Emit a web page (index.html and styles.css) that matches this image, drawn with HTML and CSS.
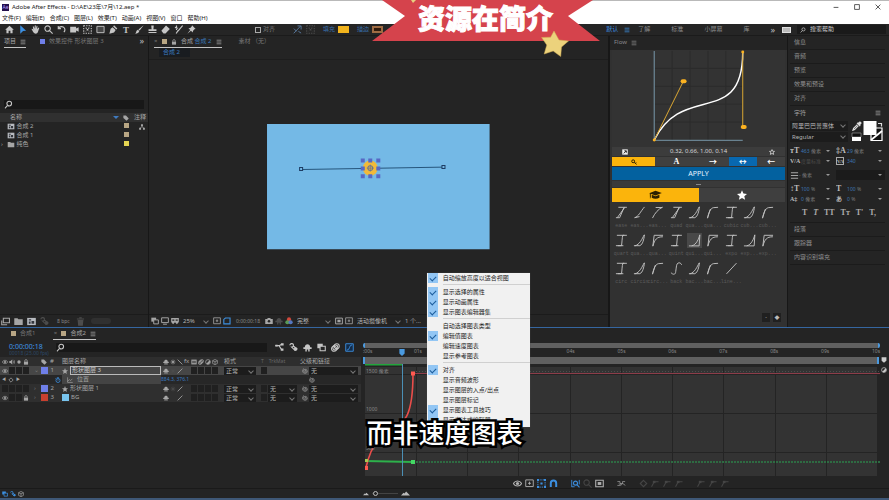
FILE: index.html
```html
<!DOCTYPE html>
<html lang="zh-CN">
<head>
<meta charset="utf-8">
<title>Adobe After Effects - D:\AE\23年\7月\12.aep *</title>
<link rel="stylesheet" href="styles.css">
</head>
<body>
<svg class="defs" width="0" height="0" aria-hidden="true">
  <symbol id="home" viewBox="0 0 10 10"><path fill="currentColor" d="M5 .8 9.8 5.2H8.4V9.2H6V6.4H4v2.8H1.6V5.2H.2z"/></symbol>
  <symbol id="arrow" viewBox="0 0 10 10"><path fill="currentColor" d="M2.5.2 9 6.4 5.6 6.6 2.5 9.6z"/></symbol>
  <symbol id="hand" viewBox="0 0 10 10"><path fill="currentColor" d="M.6 4.4c.8-.5 1.4.3 2 1.1L2 2c.1-.8.9-.8 1.1 0l.7 2.2L4.2.8c.2-.7 1-.7 1.1 0v3.3L6.2 1.2c.3-.6 1-.4 1 .2l-.4 3L8.2 3c.6-.4 1.1 0 .9.7L7.6 8c-.5 1-1.1 1.6-2.4 1.6C3 9.6 2 6.8.6 4.4z"/></symbol>
  <symbol id="mag" viewBox="0 0 10 10"><g fill="none" stroke="currentColor" stroke-width="1.2"><circle cx="4" cy="4" r="3"/><path d="m6.2 6.2 3.4 3.4"/></g></symbol>
  <symbol id="find" viewBox="0 0 10 10"><g fill="none" stroke="currentColor" stroke-width="1.2"><circle cx="5.8" cy="4" r="2.6"/><path d="M4 6 1 9.2"/></g></symbol>
  <symbol id="rotate" viewBox="0 0 10 10"><path fill="none" stroke="currentColor" stroke-width="1.2" d="M1.4 1v3h3M1.6 3.8C3 1.4 6.6 1 8.2 3.4c1 1.800.4 3.600-.6 4.6"/></symbol>
  <symbol id="cam" viewBox="0 0 10 10"><path fill="currentColor" d="M.2 2h6.600v2L9.6 2.400v5.200L6.8 6v2.200H.2z"/></symbol>
  <symbol id="anchor" viewBox="0 0 10 10"><g fill="none" stroke="currentColor" stroke-width="1.2" stroke-dasharray="1.5 1.2"><path d="M.8.8h8.400v8.400H.8z"/><path d="M3 3l4 4M7 3 3 7"/></g></symbol>
  <symbol id="rect" viewBox="0 0 10 10"><path fill="#454545" stroke="currentColor" d="M1 1.500h8v7H1z"/></symbol>
  <symbol id="pen" viewBox="0 0 10 10"><path fill="currentColor" d="m5.600.4 3.600 3.400-1 1.200L4.600 1.600zM4 2.400l3.400 3.200-1.800 2.600L.4 9.600 1.800 4.200z"/></symbol>
  <symbol id="brush" viewBox="0 0 10 10"><path fill="currentColor" d="M9.600.2 5.200 6.200 3.800 5zM3.200 5.400l1.600 1.400C4.400 9 2.400 9.600.3 9.600c1.300-1 .7-3.600 2.900-4.200z"/></symbol>
  <symbol id="stamp" viewBox="0 0 10 10"><path fill="currentColor" d="M3.600.6h2.800L6 4.800h3.400v1.800H.6V4.800H4zM.6 7.800h8.800V9H.6z"/></symbol>
  <symbol id="eraser" viewBox="0 0 10 10"><path fill="currentColor" d="M5.600.6 9.800 4.400 5 9.400H2.800L.4 6.400z"/></symbol>
  <symbol id="roto" viewBox="0 0 10 10"><path fill="none" stroke="currentColor" stroke-width="1.300" d="M2.800.6v5M1 2.600l3.600 1M9.600.6 4.400 6.800M4.600 6 2.400 9.400"/></symbol>
  <symbol id="pin" viewBox="0 0 10 10"><path fill="currentColor" d="M5.600.4 9.600 4.400 8.200 4.800 6.600 6.600 6.400 8.400 4.400 6.400.4 9.600 3.600 5.600 1.600 3.600 3.600 3.400 5.200 1.800z"/></symbol>
  <symbol id="snap" viewBox="0 0 10 10"><path fill="none" stroke="currentColor" d="M.8 9.200 8.600 1M5 1h4v4M1 4l3 3M6 7l3 2"/></symbol>
  <symbol id="menu" viewBox="0 0 10 10"><path stroke="currentColor" stroke-width="1.2" d="M1 2h8M1 5h8M1 8h8"/></symbol>
  <symbol id="lock" viewBox="0 0 10 10"><path fill="currentColor" d="M1.600 4.400h6.800v5H1.600z"/><path fill="none" stroke="currentColor" stroke-width="1.300" d="M3 4.600V2.800C3 .4 7 .4 7 2.800v1.800"/></symbol>
  <symbol id="eye" viewBox="0 0 10 10"><path fill="none" stroke="currentColor" stroke-width="1.200" d="M.4 5C2.600 1.400 7.400 1.400 9.600 5 7.400 8.600 2.600 8.600.4 5z"/><circle cx="5" cy="5" r="1.800" fill="currentColor"/></symbol>
  <symbol id="audio" viewBox="0 0 10 10"><path fill="currentColor" d="M.6 3.400h2L5.400 1v8L2.600 6.600h-2z"/><path fill="none" stroke="currentColor" d="M6.400 3c1.600 1 1.600 3 0 4M7.600 1.400c2.600 2 2.600 5.200 0 7.200"/></symbol>
  <symbol id="dot" viewBox="0 0 10 10"><circle cx="5" cy="5" r="2.800" fill="currentColor"/></symbol>
  <symbol id="tag" viewBox="0 0 10 10"><path fill="currentColor" d="M.6 1h4.400L9.600 6 6 9.600.6 5z"/></symbol>
  <symbol id="marker" viewBox="0 0 10 10"><path fill="currentColor" d="M1 .6h8v5.600L5 9.600 1 6.200z"/></symbol>
  <symbol id="comp" viewBox="0 0 10 10"><path fill="#b8bbc0" d="M.2 1h9.600v8H.2z"/><path fill="#33363c" d="M2 2.600h2.600v1.200H2zM5 4.400h3v3H5zM2 5h2v2.400H2z"/></symbol>
  <symbol id="folder" viewBox="0 0 10 10"><path fill="currentColor" d="M.3 1.400h3.600l1 1.200h4.800v6.200H.3z"/></symbol>
  <symbol id="net" viewBox="0 0 10 10"><path fill="currentColor" d="M3.400.6h3.200v3H3.400zM.2 6.400h3.200v3H.2zM6.600 6.400h3.200v3H6.600z"/><path fill="none" stroke="currentColor" d="M5 3v2.400M2 6.600 5 4.600l3 2"/></symbol>
  <symbol id="footage" viewBox="0 0 10 10"><path fill="none" stroke="currentColor" stroke-width="1.200" d="M2.600 1.400h6.800v5H2.600zM.8 4v4.600h6"/></symbol>
  <symbol id="trash" viewBox="0 0 10 10"><path fill="currentColor" d="M1 1.600h8v1.200H1zM3.600.4h2.800v1H3.600zM1.800 3.400h6.400L7.600 9.600H2.400z"/></symbol>
  <symbol id="stack" viewBox="0 0 10 10"><path fill="currentColor" d="M.4.8h6v5h-6z"/><path fill="#252525" stroke="currentColor" stroke-width="1.200" d="M3.400 3.600h5.800v5H3.400z"/></symbol>
  <symbol id="monitor" viewBox="0 0 10 10"><path fill="none" stroke="currentColor" stroke-width="1.200" d="M.8 1h8.400v6H.8zM2.600 9h4.800"/></symbol>
  <symbol id="mask" viewBox="0 0 10 10"><path fill="currentColor" d="M.2 1.200h9.600v5L7.400 9 5 6.600 2.600 9 .2 6.200z"/><path fill="#252525" d="M1.600 3h2.600v1.800H1.600zM5.800 3h2.600v1.800H5.800z"/></symbol>
  <symbol id="grid" viewBox="0 0 10 10"><path fill="none" stroke="currentColor" d="M.8 1h8.400v7.400H.8zM5 3v3.400M3.400 4.800h3.200"/></symbol>
  <symbol id="bounds" viewBox="0 0 10 10"><path fill="none" stroke="currentColor" stroke-width="1.400" d="M1 8.600V3l2-1.800h5.800v7.400z"/></symbol>
  <symbol id="photo" viewBox="0 0 10 10"><path fill="currentColor" d="M.3 2.400h2.400l.8-1.200h3l.8 1.200h2.400v6.400H.3z"/><circle cx="5" cy="5.400" r="1.600" fill="#252525"/></symbol>
  <symbol id="rgb" viewBox="0 0 10 10"><circle cx="5" cy="3" r="2.600" fill="#d24a3d"/><circle cx="3" cy="6.600" r="2.600" fill="#5a9a55"/><circle cx="7" cy="6.600" r="2.600" fill="#5477c0"/></symbol>
  <symbol id="target" viewBox="0 0 10 10"><path fill="none" stroke="currentColor" stroke-width="1.200" d="M.8 1.400h8.400v7.200H.8z"/><path fill="currentColor" d="M3 3.400h4v3.200H3z"/></symbol>
  <symbol id="clock" viewBox="0 0 10 10"><g fill="none" stroke="currentColor" stroke-width="1.300"><circle cx="5" cy="5.800" r="3.400"/><path d="M5 3.800v2.200M3.600 1h2.800M1 2.800 2.400 1.400"/></g></symbol>
  <symbol id="chart" viewBox="0 0 10 10"><path fill="none" stroke="currentColor" stroke-width="1.100" d="M1 .6V9h8.600M1 7l3-2.600 2 1.600L9 3"/></symbol>
  <symbol id="star" viewBox="0 0 10 10"><path fill="currentColor" d="M5 .2 6.400 3.600 10 3.900 7.300 6.200 8.100 9.800 5 7.900 1.900 9.800 2.700 6.200 0 3.900 3.600 3.600z"/></symbol>
  <symbol id="starline" viewBox="0 0 10 10"><path fill="none" stroke="currentColor" stroke-width="1.400" d="M5 1 6.200 3.800 9.200 4 7 6 7.700 9 5 7.400 2.300 9 3 6 .8 4 3.800 3.800z"/></symbol>
  <symbol id="shy" viewBox="0 0 10 10"><path fill="currentColor" d="M2 4.600C2 .2 8 .2 8 4.600h1.600v2H7.400v2.800H5.800V7.200H4.200v2.200H2.600V6.600H.4v-2z"/></symbol>
  <symbol id="sun" viewBox="0 0 10 10"><path stroke="currentColor" stroke-width="1.200" d="M5 1v8M1 5h8M2.400 2.400l5.200 5.200M7.600 2.400 2.400 7.600"/></symbol>
  <symbol id="slash" viewBox="0 0 10 10"><path stroke="currentColor" stroke-width="1.400" d="M1 9 9 1"/></symbol>
  <symbol id="back" viewBox="0 0 10 10"><path stroke="currentColor" stroke-width="1.400" d="M1 1l8 8"/></symbol>
  <symbol id="blend" viewBox="0 0 10 10"><path fill="currentColor" d="M.6 1h8.800v8H.6z"/><path fill="#333" d="M2.400 3h2v4h-2zM5.600 3h2v4h-2z"/></symbol>
  <symbol id="blur" viewBox="0 0 10 10"><g fill="none" stroke="currentColor" stroke-width="1.200"><circle cx="6.400" cy="3.600" r="2.800"/><circle cx="4.800" cy="5" r="2.800"/><circle cx="3.400" cy="6.400" r="2.800"/></g></symbol>
  <symbol id="half" viewBox="0 0 10 10"><circle cx="5" cy="5" r="4" fill="none" stroke="currentColor" stroke-width="1.200"/><path fill="currentColor" d="M2.200 7.800A4 4 0 0 0 7.800 2.200z"/></symbol>
  <symbol id="cube" viewBox="0 0 10 10"><path fill="none" stroke="currentColor" stroke-width="1.100" d="M5 .8 9 2.800v4.600L5 9.400 1 7.400V2.800zM1 2.800l4 2 4-2M5 4.800v4.600"/></symbol>
  <symbol id="whip" viewBox="0 0 10 10"><path fill="none" stroke="currentColor" stroke-width="1.100" d="M5 5c0-1.400 2-1 2 .4 0 2.400-4.200 2.200-4.200-.6 0-3.600 6-3.400 6 .8C8.800 10 1 10 1 5 1 3 2 1.400 3.400.8"/></symbol>
  <symbol id="flowchart" viewBox="0 0 10 10"><path fill="none" stroke="currentColor" stroke-width="1.300" d="M.4 3h4.200L7 1.600M4.600 3 7 7"/><path fill="currentColor" d="M6.600.4h3v2.400h-3zM6.400 6h3v2.600h-3zM.4 2h2.600v2H.4z"/></symbol>
  <symbol id="draft" viewBox="0 0 10 10"><path fill="none" stroke="currentColor" stroke-width="1.300" d="M1 2.600a2 2 0 1 1 2 2L7 8.400M4.600 3 9 7"/><circle cx="7.400" cy="6.800" r="2" fill="currentColor"/></symbol>
  <symbol id="graph" viewBox="0 0 10 10"><path fill="#132c49" stroke="currentColor" d="M.8.8h8.400v8.400H.8z"/><path fill="none" stroke="currentColor" d="M2 8C6 8 4 2 8 2"/></symbol>
  <symbol id="fit" viewBox="0 0 10 10"><path fill="none" stroke="currentColor" stroke-dasharray="1.600 1" d="M1 1h8v8H1z"/><path fill="currentColor" d="M0 0h2.200v2.200H0zM7.800 0H10v2.200H7.800zM0 7.800h2.200V10H0zM7.800 7.800H10V10H7.800zM3.800 3.800h2.400v2.400H3.800z"/></symbol>
  <symbol id="magnet" viewBox="0 0 10 10"><path fill="none" stroke="currentColor" stroke-width="2.200" d="M2 9V4.600c0-4 6-4 6 0V9"/></symbol>
  <symbol id="zoomfit" viewBox="0 0 10 10"><path fill="none" stroke="currentColor" d="M.8 1v8M9.200 1v5M1 8.600h3"/><circle cx="5" cy="4.600" r="2.200" fill="none" stroke="currentColor" stroke-width="1.200"/><path stroke="currentColor" stroke-width="1.200" d="m6.600 6.200 2.800 3"/></symbol>
  <symbol id="keys" viewBox="0 0 14 10"><path fill="none" stroke="currentColor" d="M.6 2h4v3h4V2h4M.6 8h4L9 5l4 3M3 5l3 3"/></symbol>
  <symbol id="keydim" viewBox="0 0 10 10"><path fill="none" stroke="currentColor" stroke-width="1.200" d="M.6 8.600 3.600 3h4.800"/><path fill="currentColor" d="M2 2h3v2.600H2z"/></symbol>
  <symbol id="diamond" viewBox="0 0 10 10"><path fill="none" stroke="currentColor" stroke-width="1.200" d="M5 1.400 8.600 5 5 8.600 1.400 5z"/></symbol>
  <symbol id="mount" viewBox="0 0 14 8"><path fill="currentColor" d="M0 7 4 3l1.400 1L8 1l6 6z"/></symbol>
  <symbol id="dropper" viewBox="0 0 10 10"><path fill="currentColor" d="M6 1.800 8 .2 9.800 2 8.200 4l.4.800-.8.600L4.600 2.200l.8-.8z"/><path fill="none" stroke="currentColor" stroke-width="1.200" d="M5.400 3.600 1.600 7.400 1 9.200l1.600-.6 3.800-4"/></symbol>
  <symbol id="key" viewBox="0 0 10 10"><circle cx="3.600" cy="3.800" r="2.400" fill="none" stroke="currentColor" stroke-width="1.600"/><path fill="none" stroke="currentColor" stroke-width="1.600" d="m5.400 5.400 4 3.600M7.200 7.400 8.600 5.800"/></symbol>
  <symbol id="cap" viewBox="0 0 16 12"><path fill="currentColor" d="M8 .8 15.800 3.600 8 6.600.2 3.800zM3.400 5.800 8 7.600l4.800-1.800v3.600C10 11.200 6 11.200 3.400 9.400zM1 4.600h1.200v4L1.200 11z"/></symbol>
  <symbol id="link" viewBox="0 0 10 10"><path fill="#eee" d="M.4.6h9.200v8.800H.4z"/><path fill="none" stroke="#222" stroke-width="1.600" d="M3 7.200 7 3.200M4 3h3.200v3.200"/></symbol>

  <symbol id="c-io" viewBox="0 0 14 14"><path d="M1 12.600h6C7.600 9 7.600 4 8.400 1.400h4.400M2 1.400h8M3 12.600h6"/></symbol>
  <symbol id="c-in" viewBox="0 0 14 14"><path d="M1 12.600h6.400C10.600 11 11.600 6 12.400.8M2 12.800C7 11.600 10 5 12 1"/></symbol>
  <symbol id="c-out" viewBox="0 0 14 14"><path d="M1.600 13.200C3 7 4.400 2.600 8 1.800l5-.4M1.600 13 4.800 3.200"/></symbol>
  <symbol id="c-ease" viewBox="0 0 14 14"><path d="M1 12.600h4L9.800 1.400h3M3.600 1.400h6.400M2.600 12.400 10.400 1.600"/></symbol>
  <symbol id="c-sin" viewBox="0 0 14 14"><path d="M1.600 12.600C6 11.600 8 6 12.400 1M2 12.600 7 11.400"/></symbol>
  <symbol id="c-sout" viewBox="0 0 14 14"><path d="M1.600 13C4 8 8 3 12.600 1.200M5 1.600h7"/></symbol>
  <symbol id="c-hin" viewBox="0 0 14 14"><path d="M1 12.800h11L12.800.8M4 12.800C9 11.600 11.800 5 12.600 1"/></symbol>
  <symbol id="c-hout" viewBox="0 0 14 14"><path d="M2 13.200 3.400 1.400H13M2 13C4 6 6 3 12.800 3"/></symbol>
  <symbol id="c-back" viewBox="0 0 14 14"><path d="M1 11.400c2.400 2.600 5 2.600 5.200-1.400C7 5 6.800 2 8.600 1.200S11.400 1 12.600 3"/></symbol>
  <symbol id="c-line" viewBox="0 0 14 14"><path d="M1.600 12.800 12.400 1.200"/></symbol>
</svg>

<header class="titlebar">
  <span class="app-icon">Ae</span>
  <h1>Adobe After Effects - D:\AE\23年\7月\12.aep *</h1>
  <div class="win-buttons">
    <button aria-label="最小化"><svg viewBox="0 0 10 10"><path d="M2 5.500h6"/></svg></button>
    <button aria-label="最大化"><svg viewBox="0 0 10 10"><path d="M2 2h6v6H2z"/></svg></button>
    <button aria-label="关闭"><svg viewBox="0 0 10 10"><path d="m2 2 6 6M8 2 2 8"/></svg></button>
  </div>
</header>
<nav class="menubar">
  <button>文件(F)</button><button>编辑(E)</button><button>合成(C)</button><button>图层(L)</button><button>效果(T)</button><button>动画(A)</button><button>视图(V)</button><button>窗口</button><button>帮助(H)</button>
</nav>

<div class="toolbar">
  <div class="tools">
    <button aria-label="主页"><svg class="ic"><use href="#home"/></svg></button>
    <button class="on" aria-label="选取"><svg class="ic"><use href="#arrow"/></svg></button>
    <button aria-label="手形"><svg class="ic"><use href="#hand"/></svg></button>
    <button aria-label="缩放"><svg class="ic"><use href="#mag"/></svg></button>
    <button aria-label="旋转"><svg class="ic"><use href="#rotate"/></svg></button>
    <button aria-label="摄像机"><svg class="ic"><use href="#cam"/></svg></button>
    <button aria-label="锚点"><svg class="ic"><use href="#anchor"/></svg></button>
    <button aria-label="矩形"><svg class="ic"><use href="#rect"/></svg></button>
    <button aria-label="钢笔"><svg class="ic"><use href="#pen"/></svg></button>
    <button class="type-tool" aria-label="文字">T</button>
    <button aria-label="画笔"><svg class="ic"><use href="#brush"/></svg></button>
    <button aria-label="仿制图章"><svg class="ic"><use href="#stamp"/></svg></button>
    <button aria-label="橡皮擦"><svg class="ic"><use href="#eraser"/></svg></button>
    <button aria-label="Roto 笔刷"><svg class="ic"><use href="#roto"/></svg></button>
    <button aria-label="人偶位置控点"><svg class="ic"><use href="#pin"/></svg></button>
  </div>
  <div class="tool-options">
    <label class="align"><input type="checkbox">对齐</label>
    <svg class="ic"><use href="#snap"/></svg>
    <svg class="ic dim"><use href="#anchor"/></svg>
    <button class="paint">填充 <span class="fill"></span></button>
    <button class="paint">描边 <span class="stroke"></span></button>
  </div>
  <div class="workspaces">
    <button class="on">默认</button><svg class="ic-s on"><use href="#menu"/></svg>
    <button class="wide">了解</button><button class="wide">标准</button><button class="wide">小屏幕</button><button class="wide">库</button>
    <span class="more">»</span><span class="chip"></span>
    <label class="help"><svg class="ic-s"><use href="#find"/></svg><input type="text" value="搜索帮助" aria-label="搜索帮助"></label>
  </div>
</div>

<main class="workspace">
  <section class="panel project">
    <div class="tabs">
      <button class="tab active">项目 <svg class="ic-s"><use href="#menu"/></svg></button>
      <button class="tab"><i class="sw blue"></i> 效果控件 形状图层 3</button>
      <span class="more push">»</span>
    </div>
    <div class="preview"></div>
    <label class="search"><svg class="ic"><use href="#find"/></svg><input type="text" aria-label="搜索项目"></label>
    <table class="files">
      <colgroup><col><col class="c-label"><col class="c-note"></colgroup>
      <thead><tr><th><span class="spread">名称 <i class="sort"></i></span></th><th><svg class="ic-s"><use href="#tag"/></svg></th><th>注释</th></tr></thead>
      <tbody>
        <tr><td><svg class="ic"><use href="#comp"/></svg> 合成 2</td><td><i class="sw sand"></i></td><td><svg class="ic-s"><use href="#net"/></svg></td></tr>
        <tr><td><svg class="ic"><use href="#comp"/></svg> 合成 1</td><td><i class="sw sand"></i></td><td></td></tr>
        <tr class="dir"><td><span class="twist">›</span><svg class="ic"><use href="#folder"/></svg> 纯色</td><td><i class="sw yellow"></i></td><td></td></tr>
      </tbody>
    </table>
    <div class="panel-foot project-foot">
      <svg class="ic"><use href="#footage"/></svg><svg class="ic"><use href="#folder"/></svg><svg class="ic"><use href="#comp"/></svg><svg class="ic dim"><use href="#draft"/></svg>
      <span class="bpc">8 bpc</span><svg class="ic dim"><use href="#trash"/></svg><span class="pill"></span>
    </div>
  </section>

  <section class="panel viewer">
    <div class="tabs">
      <div class="tab active comp-tab">
        <span class="tiny">×</span><i class="sw sand"></i><svg class="ic-s"><use href="#lock"/></svg><span>合成 <b>合成 2</b></span><svg class="ic-s"><use href="#menu"/></svg>
      </div>
      <button class="tab">素材 （无）</button>
    </div>
    <div class="crumbs"><a href="#comp2">合成 2</a></div>
    <div class="stage">
      <svg class="canvas" viewBox="0 0 222 125">
        <path fill="#74b9e6" d="M0 0h222v125H0z"/>
        <path stroke="#1d4a70" stroke-width=".9" d="M34 45.400 176 43"/>
        <circle cx="103" cy="44" r="7.500" fill="#f2b93a"/>
        <g fill="#74b9e6" stroke="#1d3c63"><path d="M32.500 43.500h3v3h-3zM174.500 41.500h3v3h-3z"/></g>
        <g fill="#5768c4"><path d="M93.500 34.500h4v4h-4zM101 34.500h4v4h-4zM109 34.500h4v4h-4zM93.500 42.500h4v4h-4zM109 42.500h4v4h-4zM93.500 50h4v4h-4zM101 50h4v4h-4zM109 50h4v4h-4z"/></g>
        <circle cx="103" cy="44" r="2.400" fill="none" stroke="#6a7590"/>
        <path stroke="#6a7590" stroke-width=".8" d="M99.500 44h7M103 40.500v7"/>
      </svg>
    </div>
    <div class="panel-foot viewer-foot">
      <svg class="ic"><use href="#stack"/></svg><svg class="ic"><use href="#monitor"/></svg><svg class="ic"><use href="#mask"/></svg>
      <span class="pick w-zoom"><select aria-label="放大率"><option>25%</option></select></span>
      <svg class="ic"><use href="#grid"/></svg><svg class="ic on"><use href="#bounds"/></svg>
      <span class="time-s">0:00:00:18</span>
      <svg class="ic"><use href="#photo"/></svg><svg class="ic dim"><use href="#shy"/></svg><svg class="ic"><use href="#rgb"/></svg>
      <span class="pick w-res"><select aria-label="分辨率"><option>完整</option></select></span>
      <svg class="ic"><use href="#target"/></svg><svg class="ic"><use href="#grid"/></svg>
      <span class="pick w-view"><select aria-label="视图"><option>活动摄像机</option></select></span>
      <span>1 个...</span>
    </div>
  </section>

  <section class="panel flow">
    <div class="tabs"><button class="tab">Flow <svg class="ic-s"><use href="#menu"/></svg></button></div>
    <svg class="curve" viewBox="0 0 174 98">
      <path fill="none" stroke="#2b2b2b" d="M60.500 1v90M78.500 1v90M96.500 1v90M114.500 1v90M42 18.500h89M42 36.500h89M42 54.500h89M42 72.500h89"/>
      <path fill="none" stroke="#698290" stroke-width="1.300" d="M42.500 1v90h89"/>
      <path fill="none" stroke="#fff" stroke-width="1.500" d="M42.500 90.500C71 32 131.500 79 131.500 2"/>
      <path fill="none" stroke="#dca732" d="M42.500 90.500 71.500 32M131.500 2v76"/>
      <g fill="#fdb321"><circle cx="42.500" cy="90.500" r="1.500"/><circle cx="131.500" cy="2" r="1.500"/><rect x="69" y="29.500" width="6" height="4" rx="2"/><rect x="129.500" y="75.500" width="6" height="4" rx="2"/></g>
    </svg>
    <div class="flow-values"><svg class="ic-s"><use href="#link"/></svg><output>0.32, 0.66, 1.00, 0.14</output><svg class="ic-s"><use href="#starline"/></svg></div>
    <div class="modes">
      <button class="gold" aria-label="关键帧"><svg class="ic-s"><use href="#key"/></svg></button>
      <button class="serif">A</button><button>→</button><button class="azure">↔</button><button>←</button>
    </div>
    <button class="apply">APPLY</button>
    <div class="grip"></div>
    <div class="lib-tabs">
      <button class="gold" aria-label="预设"><svg class="cap"><use href="#cap"/></svg></button>
      <button aria-label="收藏"><svg class="fav"><use href="#star"/></svg></button>
    </div>
    <div class="presets">
      <button><svg><use href="#c-ease"/></svg>ease</button><button><svg><use href="#c-sin"/></svg>eas...</button><button><svg><use href="#c-sout"/></svg>eas...</button>
      <button><svg><use href="#c-ease"/></svg>quad</button><button><svg><use href="#c-in"/></svg>qua...</button><button><svg><use href="#c-out"/></svg>qua...</button>
      <button><svg><use href="#c-io"/></svg>cubic</button><button><svg><use href="#c-in"/></svg>cub...</button><button><svg><use href="#c-out"/></svg>cub...</button>
      <button><svg><use href="#c-io"/></svg>quart</button><button><svg><use href="#c-in"/></svg>qua...</button><button><svg><use href="#c-hout"/></svg>qua...</button>
      <button><svg><use href="#c-io"/></svg>quint</button><button class="picked"><svg><use href="#c-hin"/></svg>qui...</button><button><svg><use href="#c-hout"/></svg>qui...</button>
      <button><svg><use href="#c-io"/></svg>expo</button><button><svg><use href="#c-hin"/></svg>exp...</button><button><svg><use href="#c-hout"/></svg>exp...</button>
      <button><svg><use href="#c-io"/></svg>circ</button><button><svg><use href="#c-in"/></svg>circin</button><button><svg><use href="#c-out"/></svg>circ...</button>
      <button><svg><use href="#c-back"/></svg>back</button><button><svg><use href="#c-in"/></svg>bac...</button><button><svg><use href="#c-out"/></svg>bac...</button>
      <button><svg><use href="#c-line"/></svg>line...</button>
    </div>
    <div class="flow-foot"><button>-</button><button>◆</button></div>
  </section>

  <aside class="side">
    <h2>信息</h2><h2>音频</h2><h2>预览</h2><h2>效果和预设</h2><h2>对齐</h2>
    <h2 class="open">字符 <svg class="ic-s"><use href="#menu"/></svg></h2>
    <div class="character">
      <div class="font-row">
        <div class="fonts">
          <span class="pick"><select class="big" aria-label="字体"><option>阿里巴巴普惠体</option></select></span>
          <span class="pick"><select aria-label="字体样式"><option>Regular</option></select></span>
        </div>
        <svg class="swatches" viewBox="0 0 34 22">
          <svg x="1" width="10" height="10"><use href="#dropper"/></svg>
          <path fill="#111" stroke="#aaa" stroke-width=".6" d="M1 12h9v4H1z"/><path fill="#fff" d="M1 16h9v4H1z"/>
          <path fill="#111" stroke="#fff" stroke-width="1.200" d="M20 7h11v12.500H20z"/><path stroke="#fff" stroke-width="1.800" d="M20 19 31 10"/>
          <path fill="#fff" d="M12.500 0h13v14h-13z"/><path fill="none" stroke="#ddd" stroke-width="1.200" d="M27 2.500h3.500v3"/>
        </svg>
      </div>
      <div class="props">
        <label><b class="g">тT</b><span class="num">463 <em>像素</em></span><i class="tri"></i></label><label><b class="g">‡A</b><span class="num">29 <em>像素</em></span><i class="tri"></i></label>
        <label><b class="g s">V/A</b><span class="num off">度量标准</span><i class="tri"></i></label><label><b class="g s box">VA</b><span class="num">340</span><i class="tri"></i></label>
      </div>
      <div class="props"><label><svg class="ic"><use href="#menu"/></svg><span class="num"><em>- 像素</em></span><i class="tri"></i></label><label class="well"><i class="tri"></i></label></div>
      <div class="props">
        <label><b class="g">↕T</b><span class="num">100 <em>%</em></span><i class="tri"></i></label><label><b class="g u">T</b><span class="num">100 <em>%</em></span><i class="tri"></i></label>
        <label><b class="g s">A‡</b><span class="num">0 <em>像素</em></span><i class="tri"></i></label><label><b class="g s">あ</b><span class="num">0 <em>%</em></span><i class="tri"></i></label>
      </div>
      <div class="faux"><button>T</button><button class="it">T</button><button>TT</button><button>Tт</button><button>T'</button><button>T,</button></div>
    </div>
    <h2>段落</h2><h2>跟踪器</h2><h2>内容识别填充</h2>
  </aside>
</main>

<section class="timeline">
  <div class="layers">
    <div class="tabs tl-tabs">
      <button class="tab"><i class="sw sand"></i> 合成1</button>
      <button class="tab active"><span class="tiny">×</span> <i class="sw sand"></i> 合成2 <svg class="ic-s"><use href="#menu"/></svg></button>
    </div>
    <div class="tl-head">
      <div class="timecode"><strong>0:00:00:18</strong><small>00018 (25.00 fps)</small></div>
      <label class="search"><svg class="ic"><use href="#find"/></svg><input type="text" aria-label="搜索图层"></label>
      <div class="tl-icons"><svg class="ic"><use href="#flowchart"/></svg><svg class="ic"><use href="#draft"/></svg><svg class="ic"><use href="#shy"/></svg><svg class="ic"><use href="#stack"/></svg><svg class="ic"><use href="#blur"/></svg><svg class="ic on"><use href="#graph"/></svg></div>
    </div>
    <table class="layer-table">
      <colgroup><col class="k1"><col class="k2"><col class="k3"><col class="k4"><col class="k5"><col class="k6"><col></colgroup>
      <thead><tr>
        <th><span class="cells"><svg class="ic-s"><use href="#eye"/></svg><svg class="ic-s"><use href="#audio"/></svg><svg class="ic-s"><use href="#dot"/></svg><svg class="ic-s"><use href="#lock"/></svg></span></th>
        <th><span class="cells"><svg class="ic-s"><use href="#tag"/></svg><span>#</span></span></th>
        <th>图层名称</th>
        <th><span class="cells"><svg class="ic-s"><use href="#shy"/></svg><svg class="ic-s"><use href="#sun"/></svg><svg class="ic-s"><use href="#back"/></svg><i>fx</i><svg class="ic-s"><use href="#blend"/></svg><svg class="ic-s"><use href="#blur"/></svg><svg class="ic-s"><use href="#half"/></svg><svg class="ic-s"><use href="#cube"/></svg></span></th>
        <th>模式</th><th class="muted"><span class="cells">T <span>TrkMat</span></span></th><th>父级和链接</th>
      </tr></thead>
      <tbody>
        <tr class="sel">
          <td><span class="cells"><svg class="ic-s"><use href="#eye"/></svg><i class="hole"></i><i class="hole"></i><i class="hole"></i></span></td>
          <td><span class="cells"><span class="tiny">⌄</span><i class="sw big blue"></i><span>1</span></span></td>
          <td><span class="name"><svg class="ic-s"><use href="#star"/></svg><span class="editing">形状图层 3</span></span></td>
          <td><span class="cells"><svg class="ic-s"><use href="#shy"/></svg><svg class="ic-s dim"><use href="#sun"/></svg><svg class="ic-s"><use href="#slash"/></svg><i></i><i class="hole"></i><i class="hole"></i><i class="hole"></i><i class="hole"></i></span></td>
          <td><span class="pick"><select aria-label="图层 1 模式"><option>正常</option></select></span></td>
          <td><span class="cells"><i class="hole"></i></span></td>
          <td><span class="cells"><svg class="ic-s"><use href="#whip"/></svg><span class="pick"><select aria-label="图层 1 父级"><option>无</option></select></span></span></td>
        </tr>
        <tr class="prop">
          <td><span class="cells keynav"><span>◀</span><svg class="ic-s"><use href="#diamond"/></svg><span>▶</span></span></td>
          <td class="end"><svg class="ic-s on"><use href="#clock"/></svg></td>
          <td class="lit"><span class="name"><svg class="ic-s"><use href="#chart"/></svg><span class="pos">位置</span></span></td>
          <td class="value">884.3, 376.1</td><td></td><td></td>
          <td><span class="cells shifted"><svg class="ic-s"><use href="#whip"/></svg></span></td>
        </tr>
        <tr>
          <td><span class="cells"><i class="hole"></i><i class="hole"></i><i class="hole"></i><i class="hole"></i></span></td>
          <td><span class="cells"><span class="tiny">›</span><i class="sw big blue"></i><span>2</span></span></td>
          <td><span class="name"><svg class="ic-s"><use href="#star"/></svg><span class="plain">形状图层 1</span></span></td>
          <td><span class="cells"><svg class="ic-s"><use href="#shy"/></svg><svg class="ic-s dim"><use href="#sun"/></svg><svg class="ic-s"><use href="#slash"/></svg><i></i><i class="hole"></i><i class="hole"></i><i class="hole"></i><i class="hole"></i></span></td>
          <td><span class="pick"><select aria-label="图层 2 模式"><option>正常</option></select></span></td>
          <td><span class="cells"><i class="hole"></i><span class="pick"><select aria-label="图层 2 遮罩"><option>无</option></select></span></span></td>
          <td><span class="cells"><svg class="ic-s"><use href="#whip"/></svg><span class="pick"><select aria-label="图层 2 父级"><option>无</option></select></span></span></td>
        </tr>
        <tr>
          <td><span class="cells"><svg class="ic-s"><use href="#eye"/></svg><i class="hole"></i><i class="hole"></i><svg class="ic-s"><use href="#lock"/></svg></span></td>
          <td><span class="cells"><span class="tiny">›</span><i class="sw big red"></i><span>3</span></span></td>
          <td><span class="name"><i class="sw big sky"></i><span class="plain">BG</span></span></td>
          <td><span class="cells"><svg class="ic-s"><use href="#shy"/></svg><i></i><svg class="ic-s"><use href="#slash"/></svg><i></i><i class="hole"></i><i class="hole"></i><i class="hole"></i><i class="hole"></i></span></td>
          <td><span class="pick"><select aria-label="图层 3 模式"><option>正常</option></select></span></td>
          <td><span class="cells"><i class="hole"></i><span class="pick"><select aria-label="图层 3 遮罩"><option>无</option></select></span></span></td>
          <td><span class="cells"><svg class="ic-s"><use href="#whip"/></svg><span class="pick"><select aria-label="图层 3 父级"><option>无</option></select></span></span></td>
        </tr>
      </tbody>
    </table>
  </div>

  <div class="graph-side">
    <div class="navbar"></div>
    <div class="ruler"><span>:00s</span><span>01s</span><span></span><span></span><span>04s</span><span>05s</span><span>06s</span><span>07s</span><span>08s</span><span>09s</span><span>10s</span></div>
    <div class="workarea"></div>
    <div class="plot">
      <svg viewBox="0 0 515 112" preserveAspectRatio="none">
        <path fill="#333" d="M0 3h512v109H0z"/>
        <path stroke="#242424" d="M51.500 3v109M102.500 3v109M153.500 3v109M205.500 3v109M256.500 3v109M307.500 3v109M358.500 3v109M410.500 3v109M461.500 3v109M0 49.500h512M0 88.500h512M0 10.500h512"/>
        <path stroke="#4d4d4d" stroke-dasharray="1 2" d="M51 7.500h464"/>
        <path stroke="#8d3d4a" d="M48 9.500h467"/>
        <path stroke="#2e6b42" stroke-width="2" stroke-dasharray="2 1" d="M48 98h467"/>
        <path stroke="#22a53c" stroke-width="1.500" d="M0 .7h38"/>
        <path stroke="#2db14b" stroke-width="2" d="M0 97l48 1"/>
        <path fill="none" stroke="#ea4d4a" stroke-width="1.600" d="M.8 104C16 41 48 91 48 9.500"/>
        <path stroke="#4b8fb5" d="M37.500 0v112"/>
        <g fill="#ff5a50"><path d="M46 7.500h4v4h-4zM0 102h3v4H0z"/></g><path fill="#a8c850" d="M0 95h3v3H0z"/><path fill="#44d864" d="M46 96h4v4h-4z"/>
      </svg>
      <div class="scale"><span>1500 像素</span><span>1000</span><span>500</span></div>
    </div>
    <div class="graph-tools">
      <button aria-label="显示属性"><svg class="ic"><use href="#eye"/></svg></button><button aria-label="图表类型"><svg class="ic"><use href="#grid"/></svg></button><button class="on" aria-label="变换框"><svg class="ic"><use href="#fit"/></svg></button><button class="on" aria-label="对齐"><svg class="ic"><use href="#magnet"/></svg></button>
      <button class="on gap" aria-label="自动缩放"><svg class="ic"><use href="#zoomfit"/></svg></button><button class="dim" aria-label="适合选择"><svg class="ic"><use href="#mag"/></svg></button><button aria-label="适合全部"><svg class="ic"><use href="#target"/></svg></button>
      <button class="gap" aria-label="单独尺寸"><svg class="ic"><use href="#keys"/></svg></button>
      <button class="gap dim" aria-label="编辑关键帧"><svg class="ic"><use href="#diamond"/></svg></button><button class="dim" aria-label="定格"><svg class="ic"><use href="#keydim"/></svg></button><button class="dim" aria-label="线性"><svg class="ic"><use href="#keydim"/></svg></button><button class="dim" aria-label="自动贝塞尔"><svg class="ic"><use href="#keydim"/></svg></button>
      <button class="gap dim" aria-label="缓动"><svg class="ic"><use href="#keydim"/></svg></button><button class="dim" aria-label="缓入"><svg class="ic"><use href="#keydim"/></svg></button><button class="dim" aria-label="缓出"><svg class="ic"><use href="#keydim"/></svg></button>
    </div>
    <svg class="playhead" viewBox="0 0 6 8"><path fill="#4a9ae0" d="M0 0h6v5L3 8 0 5z"/></svg>
  </div>
  <div class="gutter"><svg class="ic-s"><use href="#marker"/></svg><svg class="ic-s"><use href="#half"/></svg></div>

  <div class="tl-foot">
    <svg class="ic-s on"><use href="#stack"/></svg><svg class="ic-s on"><use href="#draft"/></svg><svg class="ic-s"><use href="#cube"/></svg>
    <div class="zoomer"><svg class="ic-s"><use href="#mount"/></svg><input type="range" min="0" max="100" value="6" aria-label="时间缩放"><svg class="ic"><use href="#mount"/></svg></div>
  </div>
</section>

<ul class="popup" role="menu">
  <li class="checked"><button>自动缩放高度以适合视图</button></li>
  <li class="rule"></li>
  <li class="checked"><button>显示选择的属性</button></li>
  <li class="checked"><button>显示动画属性</button></li>
  <li class="checked"><button>显示图表编辑器集</button></li>
  <li class="rule"></li>
  <li><button>自动选择图表类型</button></li>
  <li class="checked"><button>编辑值图表</button></li>
  <li><button>编辑速度图表</button></li>
  <li><button>显示参考图表</button></li>
  <li class="rule"></li>
  <li class="checked"><button>对齐</button></li>
  <li><button>显示音频波形</button></li>
  <li><button>显示图层的入点/出点</button></li>
  <li><button>显示图层标记</button></li>
  <li class="checked"><button>显示图表工具技巧</button></li>
  <li class="checked"><button>显示表达式编辑器</button></li>
</ul>

<div class="ribbon">
  <svg viewBox="0 0 228 57"><path fill="#d5434c" d="M10 0h211L196 16l32 25H0L33 16z"/><path fill="#e8cf80" d="M39 0h5l-3 3z"/><path fill="#ecd27c" stroke="#d2ae55" stroke-width=".5" d="m182 31 5 9 9.500 1-7 6-.8 9.500-7.500-5.500-9 3 2.600-9-5.200-7.500 9-.3z"/></svg>
  <span>资源在简介</span>
</div>
<p class="caption">而非速度图表</p>
</body>
</html>
```

FILE: styles.css
```css
* { box-sizing: border-box; }
html { background: #191919; }
body {
  margin: 0;
  min-height: 100vh;
  position: relative;
  display: flex;
  flex-direction: column;
  overflow: hidden;
  background: #191919;
  color: #a6a6a6;
  font: 6px/9px "Noto Sans", "Noto Sans CJK SC", sans-serif;
}
button, input, select {
  margin: 0;
  padding: 0;
  border: 0;
  background: none;
  color: inherit;
  font: inherit;
  outline: 0;
}
select { appearance: none; width: 100%; height: 8px; line-height: 8px; }
button { display: inline-flex; align-items: center; justify-content: center; }
h1, h2, p, ul { margin: 0; padding: 0; font-size: inherit; font-weight: 400; }
em, i { font-style: normal; }
svg { display: block; flex: none; }
.defs { position: absolute; }
.ic { width: 9px; height: 9px; display: inline-block; vertical-align: middle; }
.ic-s { width: 6px; height: 6px; display: inline-block; vertical-align: middle; }
.on { color: #3c8fe0; }
.dim { color: #4c4c4c; }
.tiny { width: 4px; color: #777; }
.more { font-size: 9px; color: #bbb; }
.push { margin-left: auto; }
.sw { display: inline-block; width: 5px; height: 5px; flex: none; vertical-align: middle; }
.sw.big { width: 7px; height: 7px; }
.blue { background: #6f7fe8; }
.sand { background: #b8a684; }
.yellow { background: #e5d552; }
.red { background: #c8402f; }
.sky { background: #78c4ee; }

/* window frame */
.titlebar { display: flex; align-items: center; gap: 3px; height: 13px; padding-left: 2px; background: #fff; border-top: 1px solid #b9b9b9; color: #222; }
.titlebar h1 { line-height: 10px; }
.app-icon { width: 7px; height: 7px; background: #24104e; color: #b9a4ff; font-size: 5px; line-height: 7px; text-align: center; }
.win-buttons { display: flex; gap: 13px; margin-left: auto; padding-right: 7px; }
.win-buttons svg { width: 8px; height: 8px; fill: none; stroke: #333; }
.menubar { display: flex; gap: 5px; height: 11px; padding: 0 2px; background: #fff; color: #222; }
.toolbar { display: flex; align-items: center; height: 12px; padding: 0 3px 0 4px; background: #252525; border-bottom: 1px solid #1b1b1b; color: #c6c6c6; }
.tools { display: flex; gap: 3px; width: 22%; }
.tools button { width: 10px; height: 10px; }
.type-tool { font: 700 9px/10px "Liberation Serif", serif; }
.tool-options { display: flex; align-items: center; gap: 4px; margin-left: 57px; color: #5c7ea4; }
.align { display: flex; align-items: center; gap: 2px; color: #777; margin-right: 14px; }
.align input { appearance: none; width: 6px; height: 6px; border: 1px solid #aaa; }
.paint { gap: 3px; margin-left: 4px; color: #386eab; }
.fill { width: 11px; height: 7px; background: #f2b41d; }
.stroke { width: 11px; height: 7px; border: 2px solid #a06c43; background: #301b0c; }
.workspaces { display: flex; align-items: center; margin-left: auto; color: #8d8d8d; }
.workspaces .ic-s.on { margin: 0 8px 0 6px; }
.wide { margin-right: 21px; }
.chip { width: 9px; height: 6px; margin: 0 6px 0 7px; background: #bbb; border: 1px solid #e0e0e0; }
.help { display: flex; align-items: center; gap: 4px; width: 89px; height: 9px; padding-left: 3px; background: #1a1a1a; color: #c9c9c9; }
.help input { width: 70px; }

/* panels */
.workspace { flex: 1; display: grid; grid-template-columns: 148fr 459fr 178fr 101fr; gap: 1px; background: #171717; }
.panel { display: flex; flex-direction: column; min-width: 0; background: #242424; }
.tabs { display: flex; height: 12px; padding: 0 4px; gap: 14px; color: #777; }
.tab { display: inline-flex; align-items: center; gap: 4px; height: 12px; white-space: nowrap; border-bottom: 1px solid transparent; }
.tab.active { border-bottom-color: #c4c4c4; color: #a6a6a6; }
.panel-foot { display: flex; align-items: center; height: 13px; margin-top: auto; border-top: 1px solid #1b1b1b; }
.preview { height: 52px; }
.search { display: flex; align-items: center; height: 9px; background: #181818; color: #c6c6c6; }
.search input { flex: 1; min-width: 0; }
.project .search { margin: 0 4px 4px; }
table { width: 100%; border-collapse: collapse; table-layout: fixed; }
th, td { height: 9px; padding: 0; line-height: 9px; text-align: left; font-weight: 400; white-space: nowrap; }
th svg, td svg { vertical-align: top; margin-top: 1px; }
.files thead { background: #303030; }
.files th:first-child { padding-left: 10px; }
.files td:first-child { padding-left: 7px; }
.files .ic { width: 8px; height: 7px; }
.files .dir td:first-child { padding-left: 1px; }
.twist { display: inline-block; width: 6px; }
.c-label { width: 11px; }
.c-note { width: 14px; }
.files td .sw { margin-top: -1px; }
.files td:last-child { padding-left: 5px; }
.files td:nth-child(2) { padding-left: 1px; }
.spread { display: flex; justify-content: space-between; align-items: center; padding-right: 4px; }
.sort { border: 3px solid transparent; border-top: 3px solid #3f7bc0; border-bottom: 0; }
.project-foot { gap: 4px; padding-left: 1px; }
.project-foot .bpc { margin: 0 2px 0 4px; color: #888; font-size: 5px; }
.pill { width: 20px; height: 6px; border-radius: 3px; background: #303030; margin-left: 2px; }
.viewer .tabs { gap: 17px; padding-left: 5px; }
.comp-tab b { font-weight: 400; color: #3a78bb; }
.crumbs { height: 12px; border-bottom: 1px solid #1d1d1d; padding: 0 10px; }
.crumbs a { display: inline-block; height: 9px; padding: 0 10px 0 4px; background: #191c20; color: #3b7cc2; text-decoration: none; }
.stage { flex: 1; display: flex; align-items: center; justify-content: center; }
.canvas { width: 48.500%; }
.viewer-foot { gap: 2px; padding-left: 2px; white-space: nowrap; }
.viewer-foot > svg { width: 8px; height: 8px; }
.pick { position: relative; display: flex; flex: 1; height: 8px; padding-left: 2px; background: #1c1c1c; color: #b4b4b4; }
.pick::after { content: ""; position: absolute; right: 3px; top: 2px; width: 3px; height: 3px; border: solid #777; border-width: 0 1px 1px 0; transform: rotate(45deg); pointer-events: none; }
.viewer-foot .pick { flex: none; background: #222; }
.w-zoom { width: 30px; }
.w-res { width: 38px; }
.w-view { width: 48px; }
.time-s { margin: 0 3px; color: #888; font-size: 5px; }

/* easing panel */
.flow { background: #313131; padding: 0 2px; margin-left: 1px; }
.flow .tabs { margin: 0 -2px; height: 14px; background: #242424; }
.flow .tab { color: #8a8a8a; height: 14px; }
.curve { width: 100%; background: #333; }
.flow-values { display: flex; align-items: center; justify-content: space-between; height: 9px; padding: 0 10px; background: #3c3c3c; color: #d5d5d5; }
.modes { display: grid; grid-template-columns: 43fr 42fr 31fr 28fr 28fr; height: 9px; margin-top: 1px; background: #404040; color: #fff; font-size: 8px; font-weight: 700; }
.modes button { height: 9px; line-height: 8px; overflow: hidden; }
.serif { font-family: "Liberation Serif", serif; }
.modes .gold, .lib-tabs .gold { background: #fbb40c; color: #2c2000; }
.azure { background: #0868b0; }
.apply { height: 13px; margin-top: 1px; background: #03619f; color: #eaf4ff; font-size: 7px; }
.grip { height: 6px; margin: 1px 0; background: #3a3a3a; }
.grip::after { content: ""; display: block; width: 5px; height: 1px; margin: 3px auto 0; background: #888; }
.lib-tabs { display: grid; grid-template-columns: 1fr 1fr; height: 14px; background: #3f3f3f; color: #fff; }
.cap { width: 13px; height: 10px; }
.fav { width: 10px; height: 10px; }
.presets { display: grid; grid-template-columns: repeat(9, 1fr); grid-auto-rows: 28px; padding-right: 8px; }
.presets button { flex-direction: column; justify-content: flex-start; min-width: 0; padding-top: 3px; color: #5b5b5b; font: 5px/10px "Liberation Mono", monospace; }
.presets svg { width: 13px; height: 15px; margin-bottom: 1px; padding: 1px 0; fill: none; stroke: #c4c4c4; stroke-width: 1; }
.presets .picked svg { width: 15px; background: #484848; }
.flow-foot { display: flex; gap: 3px; margin: auto 4px 5px auto; }
.flow-foot button { width: 8px; height: 9px; background: #202020; color: #bbb; font-size: 5px; }

/* right column */
.side { background: #242424; min-width: 0; padding: 0 4px 0 2px; }
.side h2 { height: 14px; padding-left: 4px; line-height: 13px; border-bottom: 1px solid #1b1b1b; color: #8f8f8f; }
.side .open { display: flex; align-items: center; justify-content: space-between; padding-right: 4px; border-bottom: 0; color: #a6a6a6; }
.character { height: 103px; padding-top: 1px; border-bottom: 1px solid #1b1b1b; }
.font-row { display: flex; gap: 3px; height: 25px; }
.fonts { flex: 1; min-width: 0; display: flex; flex-direction: column; gap: 1px; }
.fonts .pick { flex: none; height: 10px; }
.fonts select { height: 10px; }
.swatches { width: 34px; height: 22px; color: #ddd; }
.props { display: grid; grid-template-columns: 44fr 50fr; column-gap: 3px; margin-bottom: 4px; }
.props label { display: flex; align-items: center; height: 10px; white-space: nowrap; overflow: hidden; }
.g { width: 11px; font: 700 8px/10px "Liberation Serif", serif; color: #bbb; flex: none; }
.g.s { font-size: 6px; }
.g.box { width: 8px; height: 8px; line-height: 7px; border: 1px solid #aaa; margin-right: 3px; font-size: 5px; }
.g.u { border-bottom: 1px dotted #bbb; width: 8px; margin-right: 3px; }
.num { flex: 1; color: #3d77b5; font-size: 5px; }
.num em { color: #7c7c7c; }
.num.off { color: #4b4b4b; }
.tri { border: 2px solid transparent; border-top: 2px solid #999; border-bottom: 0; margin-right: 3px; }
.well { justify-content: flex-end; background: #1b1b1b; }
.faux { display: flex; justify-content: space-between; padding: 0 9px 0 12px; }
.faux button { font: 700 8px/9px "Liberation Serif", serif; color: #aaa; }
.faux .it { font-style: italic; }

/* timeline */
.timeline { position: relative; display: grid; grid-template-columns: 361fr 519fr 9fr; grid-template-rows: auto 10px; background: #242424; border-top: 1px solid #3566a0; border-bottom: 2px solid #3f5877; }
.tl-tabs { padding-left: 11px; gap: 18px; }
.tl-head { display: flex; align-items: flex-start; padding: 3px 7px 0 9px; height: 17px; }
.timecode { width: 47px; line-height: 7px; }
.timecode strong { display: block; font-size: 7px; font-weight: 400; color: #3f96e8; }
.timecode small { display: block; font-size: 5px; color: #2c4968; white-space: nowrap; overflow: hidden; }
.tl-head .search { flex: 1; }
.tl-icons { display: flex; gap: 5px; padding-left: 8px; color: #c6c6c6; }
.layer-table thead { background: #2e2e2e; }
.layer-table tbody tr { background: #2f2f2f; }
.layer-table tbody tr.sel { background: #464646; }
.layer-table tbody tr.prop { background: #272727; }
.layer-table tbody .lit { background: #444; }
.k1 { width: 32px; }
.k2 { width: 30px; }
.k3 { width: 99px; }
.k4 { width: 63px; }
.k5 { width: 35px; }
.k6 { width: 41px; }
.cells { display: flex; align-items: center; gap: 1px; height: 9px; padding-left: 2px; }
.cells svg, .name svg { margin: 0; }
.cells > .ic-s, .cells > i:not(.sw) { width: 6px; }
.shifted { padding-left: 9px; }
.hole { display: inline-block; width: 6px; height: 7px; flex: none; background: #202020; }
td:nth-child(2) .cells, th:nth-child(2) .cells { justify-content: flex-end; gap: 3px; padding-right: 8px; }
.muted { color: #686868; font-size: 5px; }
.muted .cells { gap: 5px; }
.name { display: flex; align-items: center; gap: 2px; height: 9px; }
.editing { flex: 1; height: 9px; line-height: 7px; border: 1px solid #bbb; padding-left: 1px; color: #ccc; }
.prop .name { padding-left: 5px; gap: 4px; }
.keynav { gap: 2px; font-size: 4px; }
.end { text-align: right; padding-right: 1px; }
.value { color: #3a7ac0; font-size: 5px; }
.layer-table .pick { margin-right: 3px; }

/* graph editor */
.graph-side { position: relative; padding: 15px 0 0 2px; min-width: 0; }
.navbar, .workarea { background: #606060; border: solid #4a9ae0; border-width: 0 2px; }
.navbar { height: 5px; border-radius: 2px; }
.ruler { display: flex; height: 9px; color: #8a8a8a; font-size: 5px; line-height: 6px; }
.ruler span { flex: 1; }
.ruler span:last-child { flex: 0 0 6px; }
.workarea { height: 7px; margin-right: 1px; }
.plot { position: relative; height: 112px; margin-left: 2px; }
.plot svg { width: 100%; height: 112px; }
.scale { position: absolute; inset: 3px auto auto 1px; display: grid; grid-template-rows: 38px 39px 9px; font-size: 5px; color: #888; }
.playhead { position: absolute; left: 38px; top: 21px; width: 6px; height: 7px; }
.graph-tools { display: flex; align-items: flex-end; gap: 3px; height: 12px; padding-left: 29%; color: #b0b0b0; }
.gap { margin-left: 10px; }
.graph-tools .dim { color: #454545; }
.gutter { display: flex; flex-direction: column; gap: 4px; padding: 29px 1px 0; color: #ccc; }
.tl-foot { grid-column: 1 / -1; display: grid; grid-template-columns: 7px 7px 7px 1fr; gap: 1px; align-items: center; padding-left: 2px; border-top: 1px solid #1a1a1a; }
.zoomer { display: flex; align-items: center; gap: 3px; margin-left: 39%; color: #bbb; }
.zoomer input { appearance: none; width: 26px; height: 5px; background: linear-gradient(#444, #444) center / 100% 1px no-repeat; }
.zoomer input::-webkit-slider-thumb { appearance: none; width: 5px; height: 5px; border: 1px solid #bbb; border-radius: 50%; background: #242424; }

/* overlays */
.popup { position: absolute; left: 48%; top: 273px; width: 103px; padding-bottom: 2px; list-style: none; background: #f1f1f1; color: #222; box-shadow: 0 0 1px #555; }
.popup li { display: flex; height: 10px; padding-left: 16px; position: relative; }
.popup .rule { height: 4px; }
.popup .rule::after { content: ""; flex: 1; height: 1px; margin-top: 1px; background: #d0d0d0; }
.popup .checked { background: linear-gradient(#92c6f4, #92c6f4) 1px 0 / 10px 10px no-repeat; }
.popup .checked::before { content: ""; position: absolute; left: 4px; top: 2px; width: 3px; height: 5px; border: solid #1c5c9c; border-width: 0 1px 1px 0; transform: rotate(45deg); }
.ribbon { position: absolute; left: 372px; top: 0; width: 228px; height: 57px; }
.ribbon svg { width: 228px; height: 57px; }
.ribbon span { position: absolute; left: 46px; top: 0; color: #fff; font: 900 27px/36px "Noto Sans CJK SC", sans-serif; -webkit-text-stroke: 1px #fff; white-space: nowrap; }
.caption { position: absolute; left: 0; right: 0; top: 413px; text-align: center; color: #fff; font: 500 26px/38px "Noto Sans CJK SC", sans-serif; -webkit-text-stroke: 5px #000; paint-order: stroke fill; pointer-events: none; }
```
